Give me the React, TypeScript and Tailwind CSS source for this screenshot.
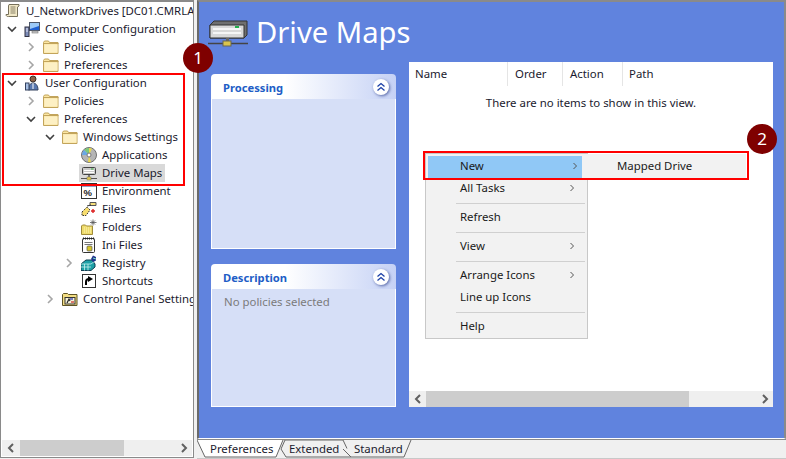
import React from "react";

const Chevron = ({ open }: { open?: boolean }) => (
  <svg width="12" height="12" viewBox="0 0 12 12" fill="none" stroke={open ? "#404040" : "#a6a6a6"} strokeWidth="1.6">
    {open ? <path d="M2 4l4 4 4-4" /> : <path d="M4 2l4 4-4 4" />}
  </svg>
);

const S = ({ children }: { children: React.ReactNode }) => (
  <svg width="16" height="16" viewBox="0 0 16 16" className="shrink-0">{children}</svg>
);

const Folder = () => (
  <S>
    <path d="M.5 3.500l1-1.500h4l1 1.500h8.500v11H.5z" fill="#fbe6a2" stroke="#c2a45b" />
    <path d="M1.500 5.500h13v8h-13z" fill="#fdf0c4" />
    <path d="M.5 4.500h15" stroke="#c2a45b" />
  </S>
);
const Book = () => (
  <S>
    <path d="M4 1.500h10v1.500l-1.500 1v9.500H3.500a2 2 0 0 1-2.500-2h2.500V3z" fill="#f1e8c6" stroke="#77705a" />
    <path d="M5.500 4h5M5.500 6h5M5.500 8h5M5.500 10h5" stroke="#8a8268" />
  </S>
);
const Computer = () => (
  <S>
    <rect x="5.500" y="1.500" width="10" height="8" fill="#1f5fd0" stroke="#4c5668" />
    <path d="M6 2h9v3l-9 3z" fill="#9ccaf7" />
    <rect x="8" y="10" width="6" height="2" fill="#c9c9c9" stroke="#777" strokeWidth=".6" />
    <rect x="1" y="6" width="4" height="9.500" fill="#7d8db8" stroke="#334" />
    <path d="M2 8h2M2 10h2" stroke="#eef" />
  </S>
);
const User = () => (
  <S>
    <circle cx="9" cy="4" r="3" fill="#8a6248" stroke="#3f3028" />
    <path d="M4.500 15c0-5 2-7 4.500-7s5 2 5 7z" fill="#5878b0" stroke="#34425f" />
    <rect x="1.500" y="8" width="3.500" height="7" fill="#a7c0e4" stroke="#34425f" />
    <path d="M9 8v6" stroke="#fff" />
  </S>
);
const Disc = () => (
  <S>
    <circle cx="8" cy="8" r="7.500" fill="#b5b5b5" stroke="#707070" />
    <path d="M8 8L3 3A7 7 0 0 1 8 1z" fill="#7cc87c" />
    <path d="M8 8V1a7 7 0 0 1 3 .7z" fill="#e9d84f" />
    <path d="M8 8l-1 7a7 7 0 0 0 3 0z" fill="#e9d84f" />
    <path d="M8 8l-7 0a7 7 0 0 1 2-5z" fill="#6aa7e6" />
    <circle cx="8" cy="8" r="2" fill="#fff" stroke="#777" />
  </S>
);
const Drive = () => (
  <S>
    <rect x="1.500" y="2.500" width="13" height="7" rx="1" fill="#c8c8c8" stroke="#444" />
    <path d="M3 5.500h10M3 7.500h10" stroke="#fff" />
    <rect x="10" y="3.500" width="2.500" height="1" fill="#3cb043" />
    <path d="M0 13.500h16" stroke="#555" />
    <rect x="7" y="10" width="2" height="2" fill="#777" />
    <rect x="6" y="12" width="4" height="3" fill="#e2c94f" stroke="#776" strokeWidth=".5" />
  </S>
);
const Env = () => (
  <S>
    <rect x=".5" y=".5" width="15" height="15" fill="#fff" stroke="#333" />
    <rect x="1" y="1" width="14" height="2.500" fill="#25408f" />
    <text x="2.500" y="13" fontSize="9.500" fontWeight="700" fontFamily="Liberation Sans" fill="#222">%</text>
  </S>
);
const Files = () => (
  <S>
    <path d="M1 11l5-5 3 3-4 5.500H1z" fill="#f7dd6e" stroke="#333" strokeDasharray="1.500 1" />
    <path d="M9 1.500h6v3H9z" fill="#f6e07c" stroke="#555" />
    <path d="M6 5l4-1" stroke="#333" />
    <path d="M12 8v4M10 10h4" stroke="#d22" strokeWidth="1.400" />
  </S>
);
const Folders = () => (
  <S>
    <path d="M.5 7l1-1h3l1 1h6v8.500H.5z" fill="#eedb6c" stroke="#a08b3a" />
    <path d="M3 9h8M3 11h8M3 13h8" stroke="#fff6b8" strokeDasharray="1 1" />
    <path d="M12 .5v6M9 3.500h6.500M10 1.500l4 4M14 1.500l-4 4" stroke="#555" strokeWidth=".8" />
  </S>
);
const Ini = () => (
  <S>
    <rect x="1.500" y="1.500" width="12" height="14" rx="1" fill="#fff" stroke="#333" />
    <path d="M2 1.500h11" stroke="#222" strokeDasharray="1 1" strokeWidth="2" />
    <path d="M3.500 5.500h8M3.500 7.500h8" stroke="#777" />
    <rect x="6" y="9" width="5" height="5" rx="1" fill="#d9c62b" stroke="#555" strokeWidth=".7" />
  </S>
);
const Registry = () => (
  <S>
    <path d="M0 9l5-4h6l3 4v3l-4 3.500H0z" fill="#1da0a6" stroke="#0e3f52" />
    <path d="M0 12h10M3.500 9v6.500M7 9v6.500M0 9h10l4-3" stroke="#c8f0ee" strokeWidth=".8" fill="none" />
    <path d="M10 4l2-3.500 3 1.500v3.500l-3 1.500z" fill="#20358e" />
    <path d="M12 3l3 1" stroke="#7be0c8" />
  </S>
);
const Shortcut = () => (
  <S>
    <rect x="1.500" y="1.500" width="13" height="13" fill="#fff" stroke="#333" />
    <path d="M5 12V9c0-2 1-3 3-3" fill="none" stroke="#000" strokeWidth="2" />
    <path d="M7 3l5 3-5 3z" fill="#000" />
  </S>
);
const Panel = () => (
  <S>
    <path d="M.5 3.500l1-1h4l1 1h8.500v11H.5z" fill="#f2dd83" stroke="#5f5424" />
    <rect x="3" y="6.500" width="10" height="6.500" fill="#f7f3d8" stroke="#333" />
    <path d="M5 12l2-4 1 2" stroke="#222" fill="none" strokeWidth="1.200" />
    <path d="M8 8h3" stroke="#2536b8" strokeWidth="1.200" />
    <path d="M9 11h3" stroke="#c22" strokeWidth="1.200" />
  </S>
);

type Row = { depth: number; label: string; chev?: "open" | "closed"; icon: React.ReactNode; selected?: boolean };

const rows: Row[] = [
  { depth: 0, label: "Computer Configuration", chev: "open", icon: <Computer /> },
  { depth: 1, label: "Policies", chev: "closed", icon: <Folder /> },
  { depth: 1, label: "Preferences", chev: "closed", icon: <Folder /> },
  { depth: 0, label: "User Configuration", chev: "open", icon: <User /> },
  { depth: 1, label: "Policies", chev: "closed", icon: <Folder /> },
  { depth: 1, label: "Preferences", chev: "open", icon: <Folder /> },
  { depth: 2, label: "Windows Settings", chev: "open", icon: <Folder /> },
  { depth: 3, label: "Applications", icon: <Disc /> },
  { depth: 3, label: "Drive Maps", icon: <Drive />, selected: true },
  { depth: 3, label: "Environment", icon: <Env /> },
  { depth: 3, label: "Files", icon: <Files /> },
  { depth: 3, label: "Folders", icon: <Folders /> },
  { depth: 3, label: "Ini Files", icon: <Ini /> },
  { depth: 3, label: "Registry", chev: "closed", icon: <Registry /> },
  { depth: 3, label: "Shortcuts", icon: <Shortcut /> },
  { depth: 2, label: "Control Panel Settings", chev: "closed", icon: <Panel /> },
];

const depthPad: Record<number, string> = { 0: "pl-[6px]", 1: "pl-[25px]", 2: "pl-[44px]", 3: "pl-[63px]" };

const ScrollArrow = ({ dir }: { dir: "l" | "r" }) => (
  <svg width="10" height="10" viewBox="0 0 10 10" fill="none" stroke="#606060" strokeWidth="2">
    {dir === "l" ? <path d="M7 1L3 5l4 4" /> : <path d="M3 1l4 4-4 4" />}
  </svg>
);

const HScroll = ({ thumbLeft, thumbWidth }: { thumbLeft: string; thumbWidth: string }) => (
  <div className="h-[16px] bg-[#efefef] flex items-center shrink-0">
    <div className={`${thumbLeft} flex items-center justify-center shrink-0`}><ScrollArrow dir="l" /></div>
    <div className={`${thumbWidth} h-full bg-[#cdcdcd] shrink-0`} />
    <div className="flex-1" />
    <div className="w-[17px] flex items-center justify-center shrink-0"><ScrollArrow dir="r" /></div>
  </div>
);

const Collapse = () => (
  <div className="w-[16px] h-[16px] rounded-full bg-white shadow-[1px_1px_3px_#5a6aa8] flex items-center justify-center">
    <svg width="10" height="10" viewBox="0 0 10 10" fill="none" stroke="#1b3fa6" strokeWidth="1.300">
      <path d="M1.500 4.500L5 1.500l3.500 3M1.500 8.500L5 5.500l3.500 3" />
    </svg>
  </div>
);

const TaskPanel = ({ title, h, children }: { title: string; h: string; children?: React.ReactNode }) => (
  <div className={`${h} w-[185px] flex flex-col`}>
    <div className="h-[25px] rounded-t-[4px] bg-gradient-to-r from-white from-40% to-[#c6d2f5] flex items-center justify-between pl-[12px] pr-[7px] shrink-0">
      <span className="text-[11.2px] font-bold text-[#215dc6] pt-[4px]">{title}</span>
      <Collapse />
    </div>
    <div className="flex-1 bg-[#d6dff7] border-x border-b border-white px-[12px] pt-[4px] text-[#7b7b7b]">{children}</div>
  </div>
);

const Arrow = () => (
  <svg width="8" height="8" viewBox="0 0 8 8" fill="none" stroke="#555" strokeWidth="1"><path d="M2.500 1l3 3-3 3" /></svg>
);

const MenuItem = ({ label, arrow }: { label: string; arrow?: boolean }) => (
  <div className="h-[22px] flex items-center justify-between pl-[32px] pr-[9px] pb-[2px] text-[#1a1a1a]">
    <span>{label}</span>
    {arrow && <Arrow />}
  </div>
);
const Sep = () => <div className="h-px bg-[#d0d0d0] ml-[28px] my-[3px]" />;

const TabShape = ({ w, d, fill }: { w: number; d: string; fill: string }) => (
  <svg className="absolute left-0 top-0" width={w} height="18" viewBox={`0 0 ${w} 18`}>
    <path d={d} fill={fill} stroke="#666" />
  </svg>
);

const Badge = ({ n, pos }: { n: string; pos: string }) => (
  <div className={`absolute ${pos} w-[30px] h-[30px] rounded-full bg-[#7f0000] text-white text-[17px] flex items-center justify-center`}>{n}</div>
);

export default function App() {
  return (
    <div className="relative w-[786px] h-[459px] overflow-hidden bg-[#f0f0f0] flex font-['Noto_Sans',sans-serif] text-[11.4px] text-[#1a1a2e]">
      <aside className="w-[194px] h-[458px] bg-white border border-[#8a8a8a] border-t-2 flex flex-col shrink-0">
        <div className="flex-1 overflow-hidden">
          <div className="h-[18px] flex items-center pl-[4px] whitespace-nowrap">
            <Book />
            <span className="ml-[5px]">U_NetworkDrives [DC01.CMRLA</span>
          </div>
          {rows.map((r, i) => (
            <div key={i} className={`h-[18px] flex items-center whitespace-nowrap ${depthPad[r.depth]}`}>
              <span className="w-[12px] h-[12px] mr-[4px] shrink-0 -ml-[1px]">
                {r.chev && <Chevron open={r.chev === "open"} />}
              </span>
              <span className={`flex items-center gap-[5px] pl-[2px] h-[18px] ${r.selected ? "bg-[#d9d9d9] w-[86px]" : ""}`}>
                {r.icon}
                <span>{r.label}</span>
              </span>
            </div>
          ))}
        </div>
        <div className="px-px pb-px">
          <HScroll thumbLeft="w-[18px]" thumbWidth="w-[104px]" />
        </div>
      </aside>

      <main className="ml-[3px] flex-1 flex flex-col min-w-0 h-[459px]">
        <div className="h-[439px] border-t-2 border-l-2 border-r-[2px] border-t-[#8a8a8a] border-l-[#6a6a6a] border-r-[#8a8a8a] bg-[#6083de] border-b border-b-white shrink-0 flex flex-col">
          <div className="h-[60px] flex items-center pl-[9px] shrink-0">
            <svg width="40" height="27" viewBox="0 0 40 27" className="shrink-0 mt-[2px]">
              <path d="M2 5l4-4h33v14l-3 3H2z" fill="#6f6f6f" stroke="#333" />
              <path d="M2 5h34v13H2z" fill="#d8d8d8" stroke="#333" />
              <path d="M5 9h28M5 13h28" stroke="#fff" strokeWidth="1.500" />
              <rect x="27" y="6" width="4" height="2" fill="#22b14c" />
              <rect x="18" y="18" width="3" height="4" fill="#666" />
              <path d="M0 23.500h40" stroke="#444" strokeWidth="1.500" />
              <rect x="15" y="21" width="8" height="5" fill="#d9c44d" stroke="#665" />
            </svg>
            <span className="ml-[8px] text-[29.2px] leading-[38px] text-white">Drive Maps</span>
          </div>
          <div className="flex pl-[12px] flex-1 min-h-0">
            <div className="flex flex-col gap-[15px] pt-[12px]">
              <TaskPanel title="Processing" h="h-[175px]" />
              <TaskPanel title="Description" h="h-[143px]">No policies selected</TaskPanel>
            </div>
            <div className="ml-[13px] w-[364px] h-[345px] bg-white flex flex-col">
              <div className="h-[24px] flex items-center shrink-0">
                <div className="w-[99px] h-[24px] pl-[6px] border-r border-[#e5e5e5] flex items-center">Name</div>
                <div className="w-[55px] h-[24px] pl-[7px] border-r border-[#e5e5e5] flex items-center">Order</div>
                <div className="w-[60px] h-[24px] pl-[7px] border-r border-[#e5e5e5] flex items-center">Action</div>
                <div className="pl-[6px]">Path</div>
              </div>
              <div className="text-center pt-[8px] flex-1">There are no items to show in this view.</div>
              <HScroll thumbLeft="w-[17px]" thumbWidth="w-[263px]" />
            </div>
          </div>
        </div>
        <div className="flex-1 border-t border-[#8a8a8a] border-b border-b-[#c8c8c8] mb-[1px] flex">
          <div className="relative w-[87px] h-[18px] z-10 flex items-center pl-[13px]">
            <TabShape w={87} d="M0 0L8 17H79L86 0" fill="#ffffff" />
            <span className="relative">Preferences</span>
          </div>
          <div className="relative w-[72px] h-[18px] -ml-[4px] flex items-center pl-[9px]">
            <TabShape w={72} d="M5 0H63L71 17H6L1 9Z" fill="#f0f0f0" />
            <span className="relative">Extended</span>
          </div>
          <div className="relative w-[69px] h-[18px] -ml-[9px] z-10 flex items-center pl-[11px]">
            <TabShape w={69} d="M0 9L8 17H61L68 0" fill="#f0f0f0" />
            <span className="relative">Standard</span>
          </div>
        </div>
      </main>

      {/* Context menu */}
      <div className="absolute left-[425px] top-[153px] w-[163px] h-[186px] bg-[#f2f2f2] border border-[#c8c8c8] p-[2px]">
        <div className="h-[22px] w-[154px] bg-[#90c8f6] flex items-center justify-between pl-[32px] pr-[3px] pb-[2px] text-[#1a1a1a]">
          <span>New</span>
          <Arrow />
        </div>
        <MenuItem label="All Tasks" arrow />
        <Sep />
        <MenuItem label="Refresh" />
        <Sep />
        <MenuItem label="View" arrow />
        <Sep />
        <MenuItem label="Arrange Icons" arrow />
        <MenuItem label="Line up Icons" />
        <Sep />
        <MenuItem label="Help" />
      </div>
      {/* Submenu */}
      <div className="absolute left-[583px] top-[154px] w-[163px] h-[24px] bg-[#f2f2f2] flex items-center pl-[34px] text-[#1a1a1a]">Mapped Drive</div>

      {/* Annotations */}
      <div className="absolute left-[2px] top-[73px] w-[183px] h-[113px] border-2 border-[#ff0000]" />
      <div className="absolute left-[423px] top-[151px] w-[326px] h-[29px] border-2 border-[#ff0000]" />
      <Badge n="1" pos="left-[183px] top-[43px]" />
      <Badge n="2" pos="left-[747px] top-[124px]" />
    </div>
  );
}
